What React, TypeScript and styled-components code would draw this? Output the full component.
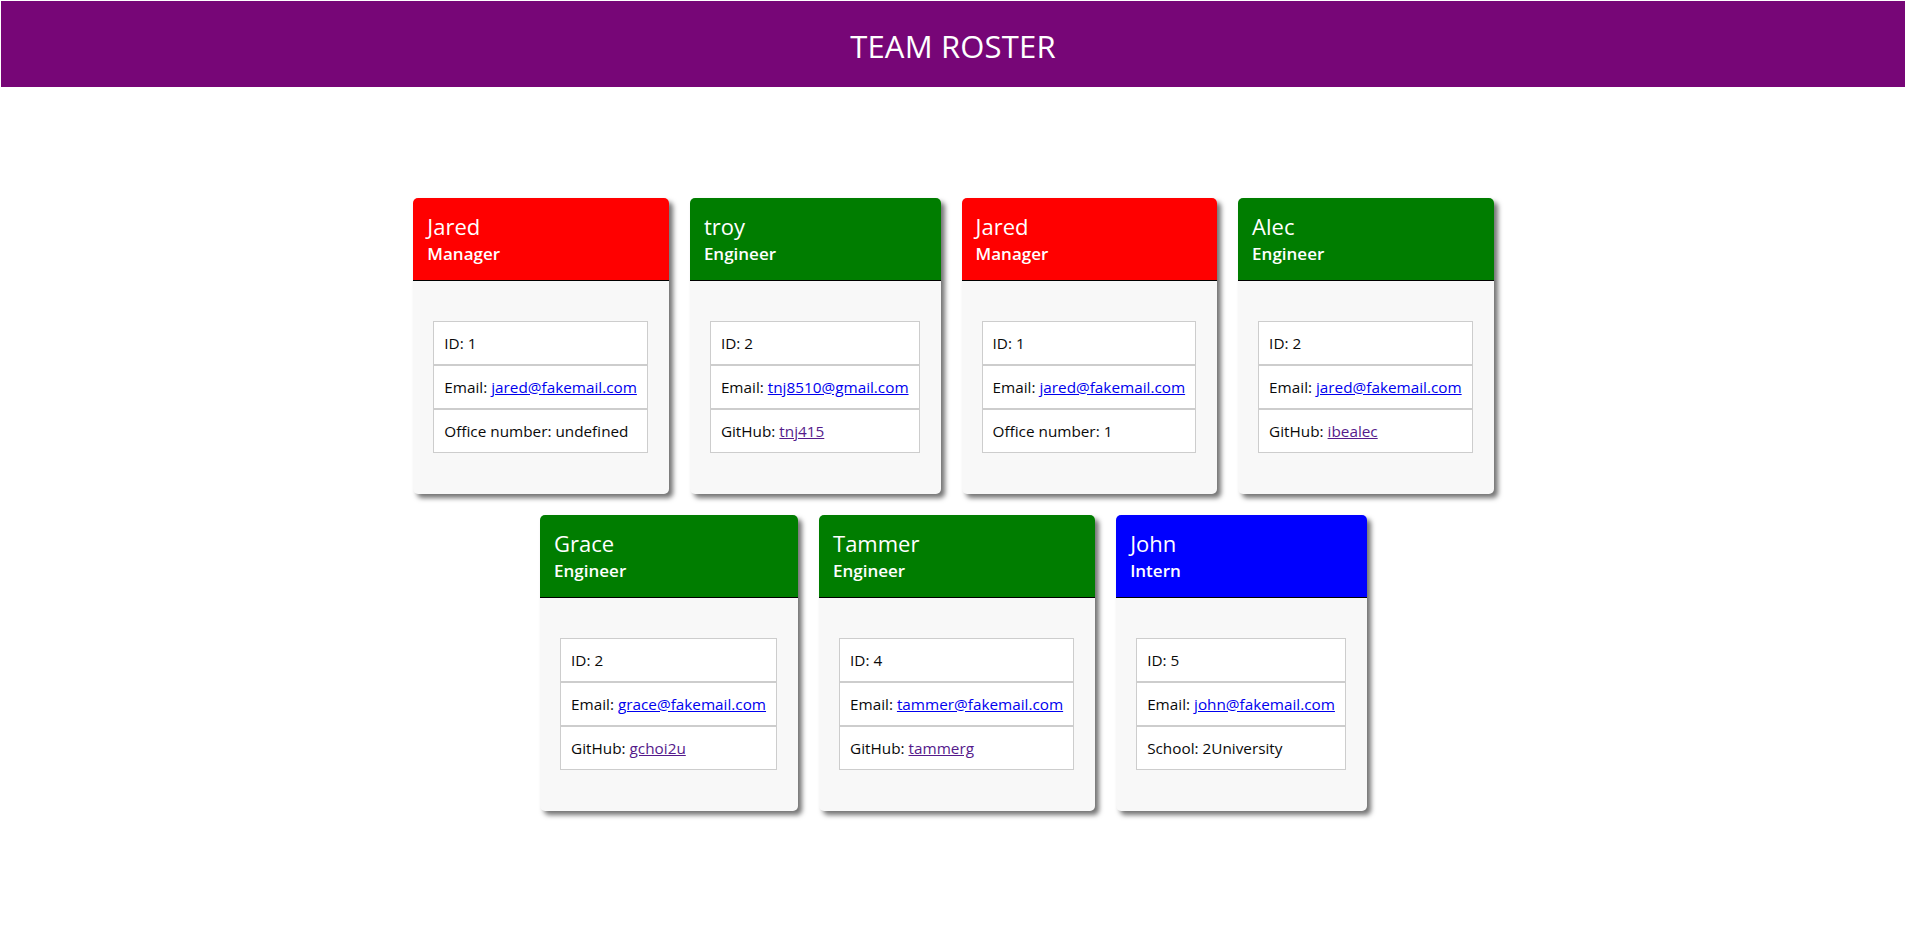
import styled, { createGlobalStyle } from "styled-components";

const GlobalStyle = createGlobalStyle`
  body {
    margin: 0;
    background: #fff;
    font-family: "Open Sans", "Noto Sans", sans-serif;
    color: #0a0a0a;
  }
`;

const Header = styled.header`
  margin: 1px 2px 0 1px;
  height: 86px;
  background: #770677;
  display: flex;
  align-items: center;
  justify-content: center;
  h1 {
    margin: 0;
    padding-top: 3px;
    color: #fff;
    font-size: 31px;
    font-weight: 400;
    letter-spacing: 0.2px;
  }
`;

const Container = styled.main`
  width: 1170px;
  box-sizing: border-box;
  margin: 0 auto;
  padding: 100px 15px 40px;
  display: flex;
  flex-wrap: wrap;
  justify-content: center;
`;

const Card = styled.div`
  flex: 0 0 auto;
  margin: 10.5px;
  border-radius: 5px;
  overflow: hidden;
  background: #f8f8f8;
  box-shadow: 4px 4px 5px rgba(0, 0, 0, 0.55);
`;

const CardHeader = styled.div<{ $color: string }>`
  background: ${(p) => p.$color};
  color: #fff;
  padding: 14px 14px 15px;
  border-bottom: 1px solid #000;
  h2 {
    margin: 0;
    font-size: 22px;
    line-height: 28px;
    font-weight: 400;
  }
  h3 {
    margin: 3px 0 0;
    font-size: 17px;
    line-height: 22px;
    font-weight: 600;
  }
`;

const CardBody = styled.div`
  padding: 40px 21px 41px 20px;
`;

const List = styled.ul`
  list-style: none;
  margin: 0;
  padding: 0;
`;

const Item = styled.li`
  background: #fff;
  border: 1px solid #cdcdcd;
  padding: 9px 10px;
  font-size: 15.3px;
  line-height: 24px;
  white-space: nowrap;
`;

const Link = styled.a<{ $visited?: boolean }>`
  color: ${(p) => (p.$visited ? "#551a8b" : "#0000ee")};
  text-decoration: underline;
`;

type Member = {
  name: string;
  role: "Manager" | "Engineer" | "Intern";
  id: number;
  email: string;
  extra: { label: string; value: string; link?: boolean };
};

const roleColor = {
  Manager: "#ff0000",
  Engineer: "#007d00",
  Intern: "#0000ff",
};

const team: Member[] = [
  { name: "Jared", role: "Manager", id: 1, email: "jared@fakemail.com", extra: { label: "Office number", value: "undefined" } },
  { name: "troy", role: "Engineer", id: 2, email: "tnj8510@gmail.com", extra: { label: "GitHub", value: "tnj415", link: true } },
  { name: "Jared", role: "Manager", id: 1, email: "jared@fakemail.com", extra: { label: "Office number", value: "1" } },
  { name: "Alec", role: "Engineer", id: 2, email: "jared@fakemail.com", extra: { label: "GitHub", value: "ibealec", link: true } },
  { name: "Grace", role: "Engineer", id: 2, email: "grace@fakemail.com", extra: { label: "GitHub", value: "gchoi2u", link: true } },
  { name: "Tammer", role: "Engineer", id: 4, email: "tammer@fakemail.com", extra: { label: "GitHub", value: "tammerg", link: true } },
  { name: "John", role: "Intern", id: 5, email: "john@fakemail.com", extra: { label: "School", value: "2University" } },
];

export default function App() {
  return (
    <>
      <GlobalStyle />
      <Header>
        <h1>TEAM ROSTER</h1>
      </Header>
      <Container>
        {team.map((m, i) => (
          <Card key={i}>
            <CardHeader $color={roleColor[m.role]}>
              <h2>{m.name}</h2>
              <h3>{m.role}</h3>
            </CardHeader>
            <CardBody>
              <List>
                <Item>ID: {m.id}</Item>
                <Item>
                  Email: <Link href={`mailto:${m.email}`}>{m.email}</Link>
                </Item>
                <Item>
                  {m.extra.label}:{" "}
                  {m.extra.link ? (
                    <Link $visited href={`https://github.com/${m.extra.value}`}>
                      {m.extra.value}
                    </Link>
                  ) : (
                    m.extra.value
                  )}
                </Item>
              </List>
            </CardBody>
          </Card>
        ))}
      </Container>
    </>
  );
}
